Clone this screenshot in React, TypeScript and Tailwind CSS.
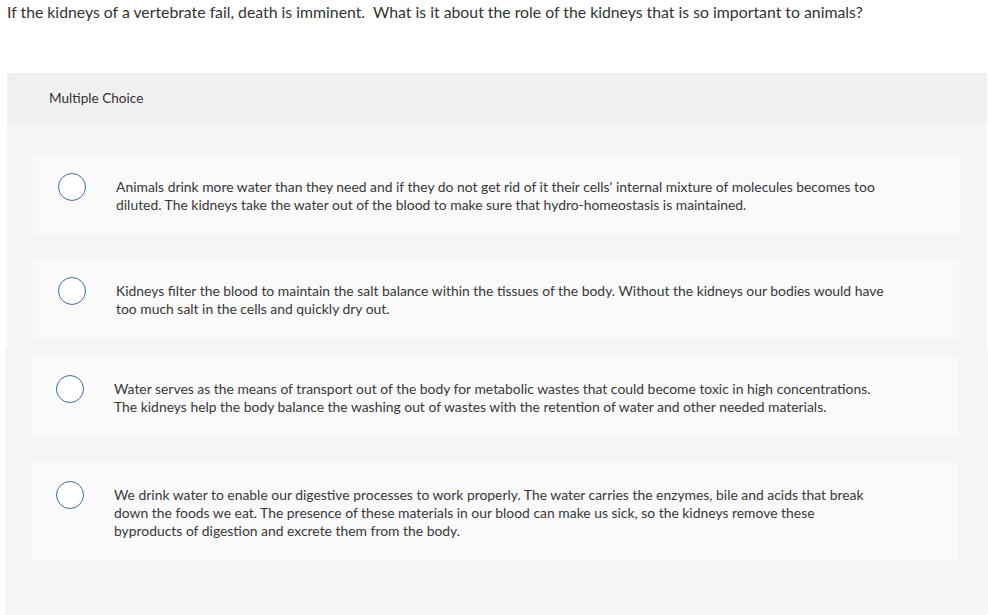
import React from "react";

const options = [
  [
    "Animals drink more water than they need and if they do not get rid of it their cells' internal mixture of molecules becomes too",
    "diluted. The kidneys take the water out of the blood to make sure that hydro-homeostasis is maintained.",
  ],
  [
    "Kidneys filter the blood to maintain the salt balance within the tissues of the body. Without the kidneys our bodies would have",
    "too much salt in the cells and quickly dry out.",
  ],
  [
    "Water serves as the means of transport out of the body for metabolic wastes that could become toxic in high concentrations.",
    "The kidneys help the body balance the washing out of wastes with the retention of water and other needed materials.",
  ],
  [
    "We drink water to enable our digestive processes to work properly. The water carries the enzymes, bile and acids that break",
    "down the foods we eat. The presence of these materials in our blood can make us sick, so the kidneys remove these",
    "byproducts of digestion and excrete them from the body.",
  ],
];

function Option({ lines, className, pt }: { lines: string[]; className: string; pt: string }) {
  return (
    <div className={`flex items-start rounded-[3px] bg-[#fafafa] ${pt} pb-[20px] ${className}`}>
      <div className="ml-[25px] mt-[-5px] h-[28px] w-[28px] shrink-0 rounded-full border-[1.5px] border-[#3d6b9b] bg-white" />
      <div className="ml-[30px] text-[13.9px] leading-[18px] text-[#383838]">
        {lines.map((l, i) => (
          <div key={i} className="whitespace-nowrap">{l}</div>
        ))}
      </div>
    </div>
  );
}

export default function App() {
  return (
    <div className="h-[615px] w-[988px] overflow-hidden bg-white" style={{ fontFamily: "Lato, 'Open Sans', sans-serif" }}>
      <div className="pl-[7px] pt-[1px] text-[15.8px] leading-[22px] text-[#333]">
        If the kidneys of a vertebrate fail, death is imminent.&nbsp; What is it about the role of the kidneys that is so important to animals?
      </div>
      <div className="mt-[50px]">
        <div className="ml-[7px] w-[980px] rounded-t-[3px] bg-[#f5f5f5]">
          <div className="flex h-[50px] items-center rounded-t-[3px] bg-[#f0f0f0] pl-[42px] text-[13.6px] text-[#333]">
            Multiple Choice
          </div>
          <div className="flex flex-col gap-[25px] pt-[32px] pb-[10px]">
            <Option lines={options[0]} pt="pt-[23px]" className="ml-[26px] mr-[27px]" />
            <Option lines={options[1]} pt="pt-[23px]" className="ml-[26px] mr-[28px]" />
          </div>
        </div>
        <div className="ml-[5px] h-[267px] w-[983px] rounded-b-[3px] bg-[#f5f5f5] pt-[9px]">
          <div className="flex flex-col gap-[26px]">
            <Option lines={options[2]} pt="pt-[23px]" className="ml-[26px] mr-[30px]" />
            <Option lines={options[3]} pt="pt-[24px]" className="ml-[26px] mr-[30px]" />
          </div>
        </div>
      </div>
    </div>
  );
}
